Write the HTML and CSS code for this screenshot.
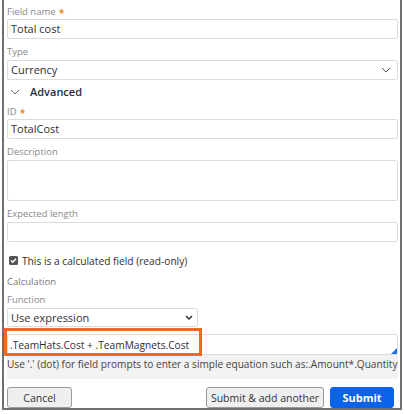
FILE: index.html
```html
<!DOCTYPE html>
<html>
<head>
<meta charset="utf-8">
<link rel="stylesheet" href="styles.css">
</head>
<body>
<div class="frame">
  <div class="field">
    <div class="label">Field name<span class="req">★</span></div>
    <div class="input">Total cost</div>
  </div>
  <div class="field">
    <div class="label">Type</div>
    <div class="input select">Currency
      <svg class="chev" width="10" height="6" viewBox="0 0 10 6"><path d="M1 1l4 4 4-4" fill="none" stroke="#555" stroke-width="1"/></svg>
    </div>
  </div>
  <div class="section">
    <svg width="10" height="6" viewBox="0 0 10 6"><path d="M1 1l4 4 4-4" fill="none" stroke="#666" stroke-width="1"/></svg>
    <span>Advanced</span>
  </div>
  <div class="field">
    <div class="label">ID<span class="req">★</span></div>
    <div class="input">TotalCost</div>
  </div>
  <div class="field">
    <div class="label">Description</div>
    <div class="input area"></div>
  </div>
  <div class="field">
    <div class="label">Expected length</div>
    <div class="input"></div>
  </div>
  <div class="check">
    <svg width="9" height="9" viewBox="0 0 9 9"><rect x="0" y="0" width="9" height="9" rx="1.5" fill="#555"/><path d="M2 4.6l1.7 1.7L7 2.8" fill="none" stroke="#fff" stroke-width="1.4"/></svg>
    <span>This is a calculated field (read-only)</span>
  </div>
  <div class="plain">Calculation</div>
  <div class="field fn">
    <div class="label">Function</div>
    <div class="input select small">Use expression
      <svg class="chev" width="8" height="5" viewBox="0 0 8 5"><path d="M1 1l3 3 3-3" fill="none" stroke="#333" stroke-width="1.5"/></svg>
    </div>
  </div>
  <div class="expr">
    <div class="input exprinput">.TeamHats.Cost + .TeamMagnets.Cost<span class="resize"></span></div>
    <div class="help">Use '.' (dot) for field prompts to enter a simple equation such as:.Amount*.Quantity</div>
    <div class="highlight"></div>
  </div>
  <div class="buttons">
    <button class="btn">Cancel</button>
    <div class="right">
      <button class="btn">Submit &amp; add another</button>
      <button class="btn primary">Submit</button>
    </div>
  </div>
</div>
</body>
</html>
```
FILE: styles.css
```css
html, body { margin: 0; padding: 0; background: #fff; }
body { font-family: "Open Sans", sans-serif; color: #333; }
.frame {
  margin-left: 2px;
  width: 400px;
  box-sizing: border-box;
  border: 2px solid #707070;
  border-top: none;
  padding: 4px 2px 0 3px;
  height: 410px;
  display: flex;
  flex-direction: column;
}
.field { display: flex; flex-direction: column; margin-bottom: 6px; }
.label { font-size: 9.5px; line-height: 14px; color: #8a8a8a; height: 14px; margin-bottom: 1px; }
.req { color: #e8922a; font-size: 8px; margin-left: 2px; vertical-align: 1px; }
.input {
  box-sizing: border-box;
  height: 20px;
  border: 1px solid #dcdcdc;
  border-radius: 2px;
  font-size: 11px;
  line-height: 18px;
  padding: 0 3px;
  color: #2e2e38;
  position: relative;
  display: flex;
  align-items: center;
}
.select { justify-content: space-between; padding-right: 6px; }
.area { height: 41px; }
.section { display: flex; align-items: center; gap: 10px; height: 16px; margin: -2px 0 5px 3px; }
.section span { font-size: 11px; font-weight: 600; color: #2e2e38; }
.check { display: flex; align-items: center; gap: 4px; height: 16px; margin: 5px 0 7px 2px; font-size: 10.2px; color: #2e2e38; }
.plain { font-size: 9.5px; color: #777; height: 14px; line-height: 14px; margin-bottom: 4px; }
.fn { margin-bottom: 0; }
.small { width: 191px; height: 19px; padding-right: 4px; }
.expr { position: relative; margin-top: 7px; }
.exprinput { height: 21px; font-size: 10.2px; padding-left: 2px; }
.resize { position: absolute; right: 0; bottom: 0; width: 0; height: 0; border-left: 6px solid transparent; border-bottom: 6px solid #1f6fe0; }
.help {
  background: #f2f2f2;
  height: 24px;
  font-size: 10.1px;
  line-height: 18px;
  color: #444;
  white-space: nowrap;
  overflow: hidden;
}
.highlight {
  position: absolute;
  left: -3px;
  top: -6px;
  width: 198px;
  height: 28px;
  box-sizing: border-box;
  border: 3px solid #f26722;
}
.buttons { display: flex; justify-content: space-between; margin-top: 8px; padding-right: 4px; }
.right { display: flex; gap: 6px; }
.btn {
  font-family: "Open Sans", sans-serif;
  height: 21px;
  box-sizing: border-box;
  border: 1px solid #9a9a9a;
  border-radius: 3px;
  background: #efefef;
  color: #333;
  font-size: 10.5px;
  padding: 0;
}
.buttons > .btn { width: 65px; }
.right .btn:first-child { width: 118px; }
.primary { width: 64px; background: #0a63e8; border-color: #0a63e8; color: #fff; font-weight: 700; font-size: 11px; }
```
